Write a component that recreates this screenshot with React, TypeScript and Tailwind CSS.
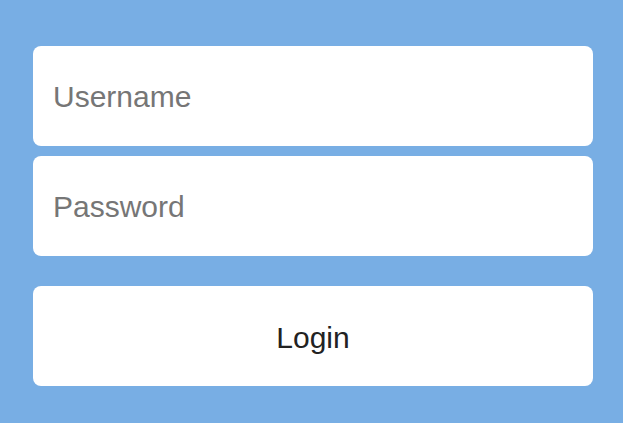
export default function App() {
  return (
    <div className="min-h-[423px] w-full bg-[#78aee4] pl-[33px] pr-[30px] pt-[46px] font-['Liberation_Sans',Arial,sans-serif]">
      <form className="flex flex-col" onSubmit={(e) => e.preventDefault()}>
        <input
          type="text"
          placeholder="Username"
          className="h-[100px] w-full rounded-lg bg-white px-5 pt-[2px] text-[30px] text-[#222] outline-none placeholder:text-[#767676]"
        />
        <input
          type="password"
          placeholder="Password"
          className="mt-[10px] h-[100px] w-full rounded-lg bg-white px-5 pt-[2px] text-[30px] text-[#222] outline-none placeholder:text-[#767676]"
        />
        <button
          type="submit"
          className="mt-[30px] h-[100px] w-full rounded-lg bg-white pt-[2px] text-[30px] text-[#222]"
        >
          Login
        </button>
      </form>
    </div>
  );
}
